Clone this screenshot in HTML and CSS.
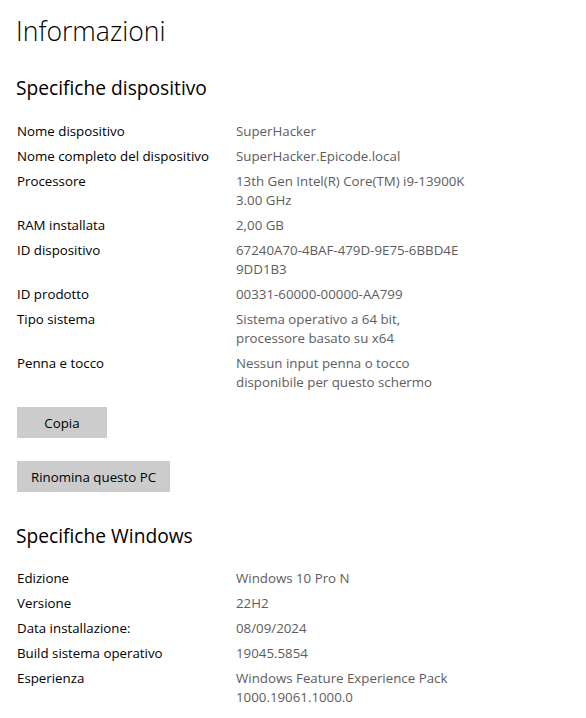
FILE: index.html
```html
<!DOCTYPE html>
<html lang="it">
<head>
<meta charset="utf-8">
<title>Informazioni</title>
<link rel="stylesheet" href="styles.css">
</head>
<body>
<main class="page">
  <h1 class="title">Informazioni</h1>

  <section class="section">
    <h2 class="section-title">Specifiche dispositivo</h2>
    <dl class="specs">
      <div class="row"><dt>Nome dispositivo</dt><dd>SuperHacker</dd></div>
      <div class="row"><dt>Nome completo del dispositivo</dt><dd>SuperHacker.Epicode.local</dd></div>
      <div class="row"><dt>Processore</dt><dd>13th Gen Intel(R) Core(TM) i9-13900K<br>3.00 GHz</dd></div>
      <div class="row"><dt>RAM installata</dt><dd>2,00 GB</dd></div>
      <div class="row"><dt>ID dispositivo</dt><dd>67240A70-4BAF-479D-9E75-6BBD4E<br>9DD1B3</dd></div>
      <div class="row"><dt>ID prodotto</dt><dd>00331-60000-00000-AA799</dd></div>
      <div class="row"><dt>Tipo sistema</dt><dd>Sistema operativo a 64 bit,<br>processore basato su x64</dd></div>
      <div class="row"><dt>Penna e tocco</dt><dd>Nessun input penna o tocco<br>disponibile per questo schermo</dd></div>
    </dl>
    <div class="actions">
      <button class="btn btn-copy" type="button">Copia</button>
      <button class="btn btn-rename" type="button">Rinomina questo PC</button>
    </div>
  </section>

  <section class="section section-windows">
    <h2 class="section-title">Specifiche Windows</h2>
    <dl class="specs">
      <div class="row"><dt>Edizione</dt><dd>Windows 10 Pro N</dd></div>
      <div class="row"><dt>Versione</dt><dd>22H2</dd></div>
      <div class="row"><dt>Data installazione:</dt><dd>08/09/2024</dd></div>
      <div class="row"><dt>Build sistema operativo</dt><dd>19045.5854</dd></div>
      <div class="row"><dt>Esperienza</dt><dd>Windows Feature Experience Pack<br>1000.19061.1000.0</dd></div>
    </dl>
  </section>
</main>
</body>
</html>
```

FILE: styles.css
```css
html, body {
  margin: 0;
  padding: 0;
  background: #ffffff;
}

body {
  font-family: "Open Sans", "Noto Sans", "Liberation Sans", sans-serif;
  color: #000000;
}

.page {
  padding: 11px 0 0 16px;
}

.title {
  margin: 0;
  font-size: 26.6px;
  line-height: 40px;
  font-weight: 300;
}

.section-title {
  margin: 23px 0 0 0;
  font-size: 19.2px;
  line-height: 28px;
  font-weight: 400;
}

.section-windows .section-title {
  margin-top: 30px;
}

.specs {
  margin: 20px 0 0 1px;
  display: flex;
  flex-direction: column;
  gap: 6px;
}

.section-windows .specs {
  margin-top: 19px;
}

.row {
  display: grid;
  grid-template-columns: 219px 1fr;
  font-size: 13.3px;
  line-height: 19px;
}

.row dt {
  margin: 0;
}

.row dd {
  margin: 0;
  color: #5d5d5d;
}

.actions {
  margin: 15px 0 0 1px;
  display: flex;
  flex-direction: column;
  align-items: flex-start;
  gap: 23px;
}

.btn {
  height: 31px;
  border: none;
  background: #cccccc;
  color: #000000;
  font-family: inherit;
  font-size: 13.3px;
  padding: 0;
  white-space: nowrap;
}

.btn-copy {
  width: 90px;
}

.btn-rename {
  width: 153px;
}
```
